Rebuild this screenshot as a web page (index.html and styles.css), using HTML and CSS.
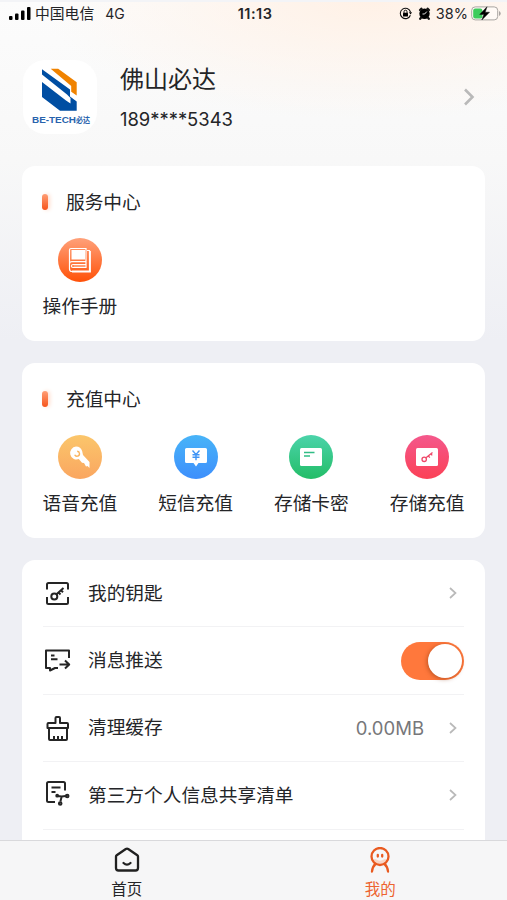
FILE: index.html
```html
<!DOCTYPE html>
<html lang="zh-CN">
<head>
    <meta charset="UTF-8">
    <meta name="viewport" content="width=device-width, initial-scale=1.0">
    <title>我的</title>
    <link rel="stylesheet" href="styles.css">
</head>
<body>
    <header class="status-bar">
        <div class="status-left">
            <svg width="22" height="13" viewBox="0 0 22 13">
                <rect x="0" y="9" width="3.5" height="4" rx="1"/>
                <rect x="6" y="6.5" width="3.5" height="6.5" rx="1"/>
                <rect x="12" y="3.5" width="3.5" height="9.5" rx="1"/>
                <rect x="18" y="0" width="3.5" height="13" rx="1"/>
            </svg>
            <span class="carrier">中国电信</span>
            <span class="network">4G</span>
        </div>
        <div class="status-time">11:13</div>
        <div class="status-right">
            <svg class="lock" width="13" height="13" viewBox="0 0 13 13">
                <path d="M11.4 8.2A5.2 5.2 0 1 1 11.5 5" fill="none" stroke="#111" stroke-width="1.1"/>
                <path d="M9.9 5.2h3.1l-1.4 2.4z"/>
                <rect x="4" y="5.8" width="5" height="3.8" rx=".5"/>
                <path d="M5 6V4.7a1.5 1.5 0 0 1 3 0V6" fill="none" stroke="#111"/>
            </svg>
            <svg class="alarm" width="13" height="13" viewBox="0 0 13 13">
                <circle cx="6.5" cy="6.8" r="5.2"/>
                <path d="M2 3l1.500-1.300M11 3L9.500 1.700M3 10.800l-.8 1M10 10.800l.8 1" stroke="#111" stroke-width="2.2" stroke-linecap="round"/>
                <path d="M8.800 4.600L6.600 7H4.500" fill="none" stroke="#fff" stroke-width=".9"/>
            </svg>
            <span class="percent">38%</span>
            <svg width="30" height="15" viewBox="0 0 30 15">
                <rect x=".7" y=".9" width="26" height="13" rx="3.5" fill="#fffaf6" stroke="#a9a5a2"/>
                <rect x="2.200" y="2.400" width="9.200" height="10" rx="2" fill="#3dcc5c"/>
                <path d="M28 5v5q1.700-.8 1.700-2.500T28 5z" fill="#a9a5a2"/>
                <path d="M16 .8L8.700 8.400h4.200L10.800 14l7.700-7.800h-4.300z" stroke="#111" stroke-width=".5"/>
            </svg>
        </div>
    </header>

    <section class="profile">
        <div class="avatar">
            <svg width="74" height="74" viewBox="0 0 74 74">
                <path d="M27.700 8.700h7.500l18.500 13.500V35.500l-5.500-3.800V26z" fill="#f08300"/>
                <path d="M19 9.300l28 20.200v7l6.700 5V50.700H37L19 37V22l24 18.500 4.500 3v-5.500L44 34.500 19 14.500z" fill="#004ea2"/>
                <text class="logo-text" x="9" y="62.500" textLength="44" lengthAdjust="spacingAndGlyphs">BE-TECH</text>
                <text class="logo-cn" x="53" y="62.500" textLength="14" lengthAdjust="spacingAndGlyphs">必达</text>
            </svg>
        </div>
        <div class="user">
            <h1>佛山必达</h1>
            <p>189****5343</p>
        </div>
        <svg class="profile-arrow" width="12" height="18" viewBox="0 0 12 18"><path d="M2 1.500L9.500 9 2 16.500"/></svg>
    </section>

    <main>
        <section class="card">
            <h2>服务中心</h2>
            <div class="grid">
                <a class="item">
                    <span class="circle orange">
                        <svg width="24" height="26" viewBox="0 0 24 26" fill="none" stroke="#fff">
                            <rect x="4" y="3.500" width="12.500" height="8.500" fill="#fff"/>
                            <path d="M1.500 16.500V3q0-1.500 1.500-1.500h15v13.200H4q-2.500 0-2.500 2V22q0 2.500 2.500 2.500h17.500V3.500H19M18 14.500v3H5q-1.500 0-1.500 1.500T5 20.500h13v-3" stroke-width="1.200"/>
                            <path d="M22 4v20.500H4" stroke-width="1.800"/>
                            <path d="M5.500 19h12" stroke-opacity=".7"/>
                        </svg>
                    </span>
                    <span>操作手册</span>
                </a>
            </div>
        </section>

        <section class="card">
            <h2>充值中心</h2>
            <div class="grid">
                <a class="item">
                    <span class="circle yellow">
                        <svg width="26" height="26" viewBox="0 0 26 26">
                            <path d="M9 2.500a6.500 6.500 0 0 1 6.200 4.700L16 11l6.500 7v6l-2-2-1.500.5L17 19l-2-.2-3.200-3.700A6.500 6.500 0 1 1 9 2.500z" fill="#fff"/>
                            <path d="M7.700 10.700a2.500 2.500 0 1 0 2.500-3.500" fill="none" stroke="#fbb45d" stroke-width="1.400"/>
                        </svg>
                    </span>
                    <span>语音充值</span>
                </a>
                <a class="item">
                    <span class="circle blue">
                        <svg width="24" height="24" viewBox="0 0 24 24">
                            <path d="M2.500 3h19q1.500 0 1.500 1.500v12q0 1.500-1.500 1.500h-7L12 21.500 9.500 18h-7Q1 18 1 16.500v-12Q1 3 2.500 3z" fill="#fff"/>
                            <path d="M8.500 5.500l3.500 4 3.500-4M8.500 9.800h7M8.500 12.300h7M12 9.500v5.700" fill="none" stroke="#3f94f5" stroke-width="1.400"/>
                        </svg>
                    </span>
                    <span>短信充值</span>
                </a>
                <a class="item">
                    <span class="circle green">
                        <svg width="24" height="20" viewBox="0 0 24 20">
                            <rect x="1" y="1" width="22" height="18" rx="1.500" fill="#fff"/>
                            <path d="M5 5.500h10.500M5 9h6" stroke="#31bd85" stroke-width="1.600"/>
                        </svg>
                    </span>
                    <span>存储卡密</span>
                </a>
                <a class="item">
                    <span class="circle pink">
                        <svg width="24" height="20" viewBox="0 0 24 20">
                            <rect x="1" y="1" width="22" height="18" rx="1.500" fill="#fff"/>
                            <g fill="none" stroke="#ef4769" stroke-width="1.300"><circle cx="9.200" cy="12.300" r="2.200"/><path d="M11 10.800l6.500-5.300M13.300 8.800l1.500 1.800M15.800 6.800l1.400 1.600"/></g>
                        </svg>
                    </span>
                    <span>存储充值</span>
                </a>
            </div>
        </section>

        <section class="card list">
            <a class="row">
                <svg class="row-icon" viewBox="0 0 28 28">
                    <path d="M4 10.500V5.500Q4 4 5.500 4h18Q25 4 25 5.500v5M4 18v5.500Q4 25 5.500 25h18q1.500 0 1.500-1.500V18"/>
                    <circle cx="11.300" cy="17.500" r="3"/>
                    <path d="M13.500 15.300L20.500 9M15.500 13.500l2 2M18 11.200l2 2"/>
                </svg>
                <span class="label">我的钥匙</span>
                <svg class="arrow" viewBox="0 0 8 12"><path d="M1 1l5.500 5L1 11"/></svg>
            </a>
            <a class="row">
                <svg class="row-icon" viewBox="0 0 28 28">
                    <path d="M26 11V3.500H3v17.500h4v2.500l5-2.500h3M8 8.500h3.500M8 12.300h6.500M16.500 17.500h9.500M22 13.500l4.200 4-4.200 4"/>
                </svg>
                <span class="label">消息推送</span>
                <span class="switch"></span>
            </a>
            <a class="row">
                <svg class="row-icon" viewBox="0 0 28 28">
                    <path d="M12.500 9V4q0-1 1-1h2.500q1 0 1 1v5H24q1 0 1 1v4H4.500V10q0-1 1-1zM6 14v11q0 1 1 1h16q1 0 1-1V14M11 25v-3M15 25v-3M19 25v-3"/>
                </svg>
                <span class="label">清理缓存</span>
                <span class="value">0.00MB</span>
                <svg class="arrow" viewBox="0 0 8 12"><path d="M1 1l5.500 5L1 11"/></svg>
            </a>
            <a class="row">
                <svg class="row-icon" viewBox="0 0 28 28">
                    <path d="M12 21H5.500Q4 21 4 19.500v-17Q4 1 5.500 1h15Q22 1 22 2.500V9.500M8.500 6.500h9M8.500 11h4M14.500 15l4.200.5 4-.4M18.700 15.500l-1.300 5"/>
                    <circle cx="14.200" cy="14.700" r=".9"/><circle cx="24.200" cy="15" r="1.300"/><circle cx="17.200" cy="22.500" r="1.300"/>
                </svg>
                <span class="label">第三方个人信息共享清单</span>
                <svg class="arrow" viewBox="0 0 8 12"><path d="M1 1l5.500 5L1 11"/></svg>
            </a>
            <div class="row"></div>
        </section>
    </main>

    <nav class="tab-bar">
        <a class="tab">
            <svg width="28" height="26" viewBox="0 0 28 26">
                <path d="M3 9.500Q3 8.800 3.700 8.300L12.800 2q1.200-.8 2.400 0l9.100 6.300q.7.500.7 1.200V21q0 2.500-2.500 2.500h-17Q3 23.500 3 21z"/>
                <path d="M10.500 16q3.500 3.200 7 0"/>
            </svg>
            <span>首页</span>
        </a>
        <a class="tab active">
            <svg width="28" height="26" viewBox="0 0 28 26">
                <path d="M9 13.500q5 3.500 10 0" stroke="#f9d5c4" stroke-width="3"/>
                <circle cx="14" cy="9.500" r="8.500"/>
                <path d="M9.500 17Q6.500 19.500 6 24.500M18.500 17q3 2.500 3.500 7.500M11.800 8v1.500M16.200 8v1.500"/>
            </svg>
            <span>我的</span>
        </a>
    </nav>
</body>
</html>
```
FILE: styles.css
```css
* {
    box-sizing: border-box;
}

body {
    margin: 0;
    height: 900px;
    display: flex;
    flex-direction: column;
    overflow: hidden;
    font-family: "Liberation Sans", "Noto Sans CJK SC", sans-serif;
    color: #242528;
    background: radial-gradient(ellipse 330px 120px at 370px 0, #fff1e6, rgba(255, 244, 235, 0)),
        linear-gradient(#fcfcfc, #f8f8f8 160px, #eeeff4 340px);
}

h1, h2, p {
    margin: 0;
    font-weight: normal;
}

.status-bar {
    flex: none;
    display: grid;
    grid-template-columns: 1fr auto 1fr;
    align-items: center;
    height: 27px;
    padding: 0 6px 2px 9px;
    border-top: 2px solid #f3f4f7;
    font-size: 14.5px;
    line-height: 22px;
}

.status-left,
.status-right {
    display: flex;
    align-items: center;
}

.carrier {
    margin-left: 4px;
    font-size: 14.8px;
}

.network {
    margin-left: 11px;
    font-family: Inter, sans-serif;
    font-size: 14px;
}

.status-time {
    font-family: Inter, sans-serif;
    font-size: 14.5px;
    font-weight: 600;
    letter-spacing: 0.5px;
}

.status-right {
    justify-content: flex-end;
}

.alarm {
    margin: 0 5px 0 6px;
}

.percent {
    margin-right: 3px;
    font-family: Inter, sans-serif;
    font-size: 14.5px;
}

.profile {
    flex: none;
    display: flex;
    align-items: center;
    height: 139px;
    padding: 0 32px 0 23px;
}

.avatar {
    width: 74px;
    height: 74px;
    border-radius: 22px;
    background: #fff;
}

.avatar svg {
    display: block;
}

.logo-text {
    font: bold 9.5px "Liberation Sans", sans-serif;
    fill: #2863ad;
}

.logo-cn {
    font: bold 8px "Noto Sans CJK SC", sans-serif;
    fill: #2863ad;
}

.user {
    flex: 1;
    margin-left: 23px;
}

.user h1 {
    font-size: 24px;
    line-height: 36px;
}

.user p {
    margin-top: 8px;
    font-family: Inter, sans-serif;
    font-size: 18.4px;
    line-height: 26px;
}

.profile-arrow,
.arrow {
    fill: none;
    stroke: #b9b9b9;
    stroke-width: 2.6;
}

main {
    flex: 1;
    min-height: 0;
    overflow: hidden;
    padding: 0 22px;
}

.card {
    height: 175px;
    margin-bottom: 22px;
    padding-top: 23px;
    border-radius: 13px;
    background: #fff;
    font-size: 18.7px;
    line-height: 28px;
}

.card h2 {
    display: flex;
    align-items: center;
    padding-left: 20px;
    font-size: 18.7px;
    line-height: 28px;
}

.card h2::before {
    content: "";
    width: 6px;
    height: 16px;
    margin-right: 18px;
    margin-top: -3px;
    border-radius: 3px;
    background: linear-gradient(#ff9e75, #f6541b);
    box-shadow: 2px 0 4px #ffddcf;
}

.grid {
    display: grid;
    grid-template-columns: repeat(4, 1fr);
    margin-top: 21px;
}

.item {
    display: flex;
    flex-direction: column;
    align-items: center;
    gap: 11px;
}

.circle {
    display: flex;
    align-items: center;
    justify-content: center;
    width: 44px;
    height: 44px;
    border-radius: 50%;
}

.orange {
    background: linear-gradient(#ffa17a, #ff5108);
}

.yellow {
    background: linear-gradient(#fbc66b, #faa660);
}

.blue {
    background: linear-gradient(#48b4f8, #3d8ffc);
}

.green {
    background: linear-gradient(#4bd3aa, #23bd68);
}

.pink {
    background: linear-gradient(#f4588c, #fb4156);
}

.list {
    height: auto;
    margin: 0;
    padding: 0 21px;
}

.row {
    display: flex;
    align-items: center;
    height: 67.4px;
    padding-right: 7px;
    border-bottom: 1px solid #f2f2f4;
}

.row-icon {
    width: 28px;
    height: 28px;
    margin-right: 17px;
    fill: none;
    stroke: #252525;
    stroke-width: 2;
    stroke-linejoin: round;
}

.label {
    flex: 1;
    padding-top: 1px;
}

.value {
    margin-right: 25px;
    color: #77777a;
    font-family: Inter, sans-serif;
    font-size: 18.5px;
}

.arrow {
    width: 8px;
    height: 12px;
    stroke-width: 1.7;
}

.switch {
    width: 63px;
    height: 38px;
    margin-right: -7px;
    padding: 2px;
    border-radius: 19px;
    background: #ff783c;
}

.switch::after {
    content: "";
    display: block;
    width: 34px;
    height: 34px;
    margin-left: auto;
    border-radius: 50%;
    background: #fff;
    box-shadow: -1px 1px 4px rgba(130, 50, 10, 0.5);
}

.tab-bar {
    flex: none;
    display: grid;
    grid-template-columns: 1fr 1fr;
    height: 60px;
    border-top: 1px solid #d9d9dc;
    background: #f6f6f7;
}

.tab {
    display: flex;
    flex-direction: column;
    align-items: center;
    padding-top: 6px;
    font-size: 15.5px;
    line-height: 23px;
}

.tab svg {
    flex: none;
    margin-bottom: 5px;
    fill: none;
    stroke: #202020;
    stroke-width: 2.3;
    stroke-linecap: round;
}

.tab.active {
    color: #ed6430;
}

.tab.active svg {
    stroke: #e95a20;
}
```
